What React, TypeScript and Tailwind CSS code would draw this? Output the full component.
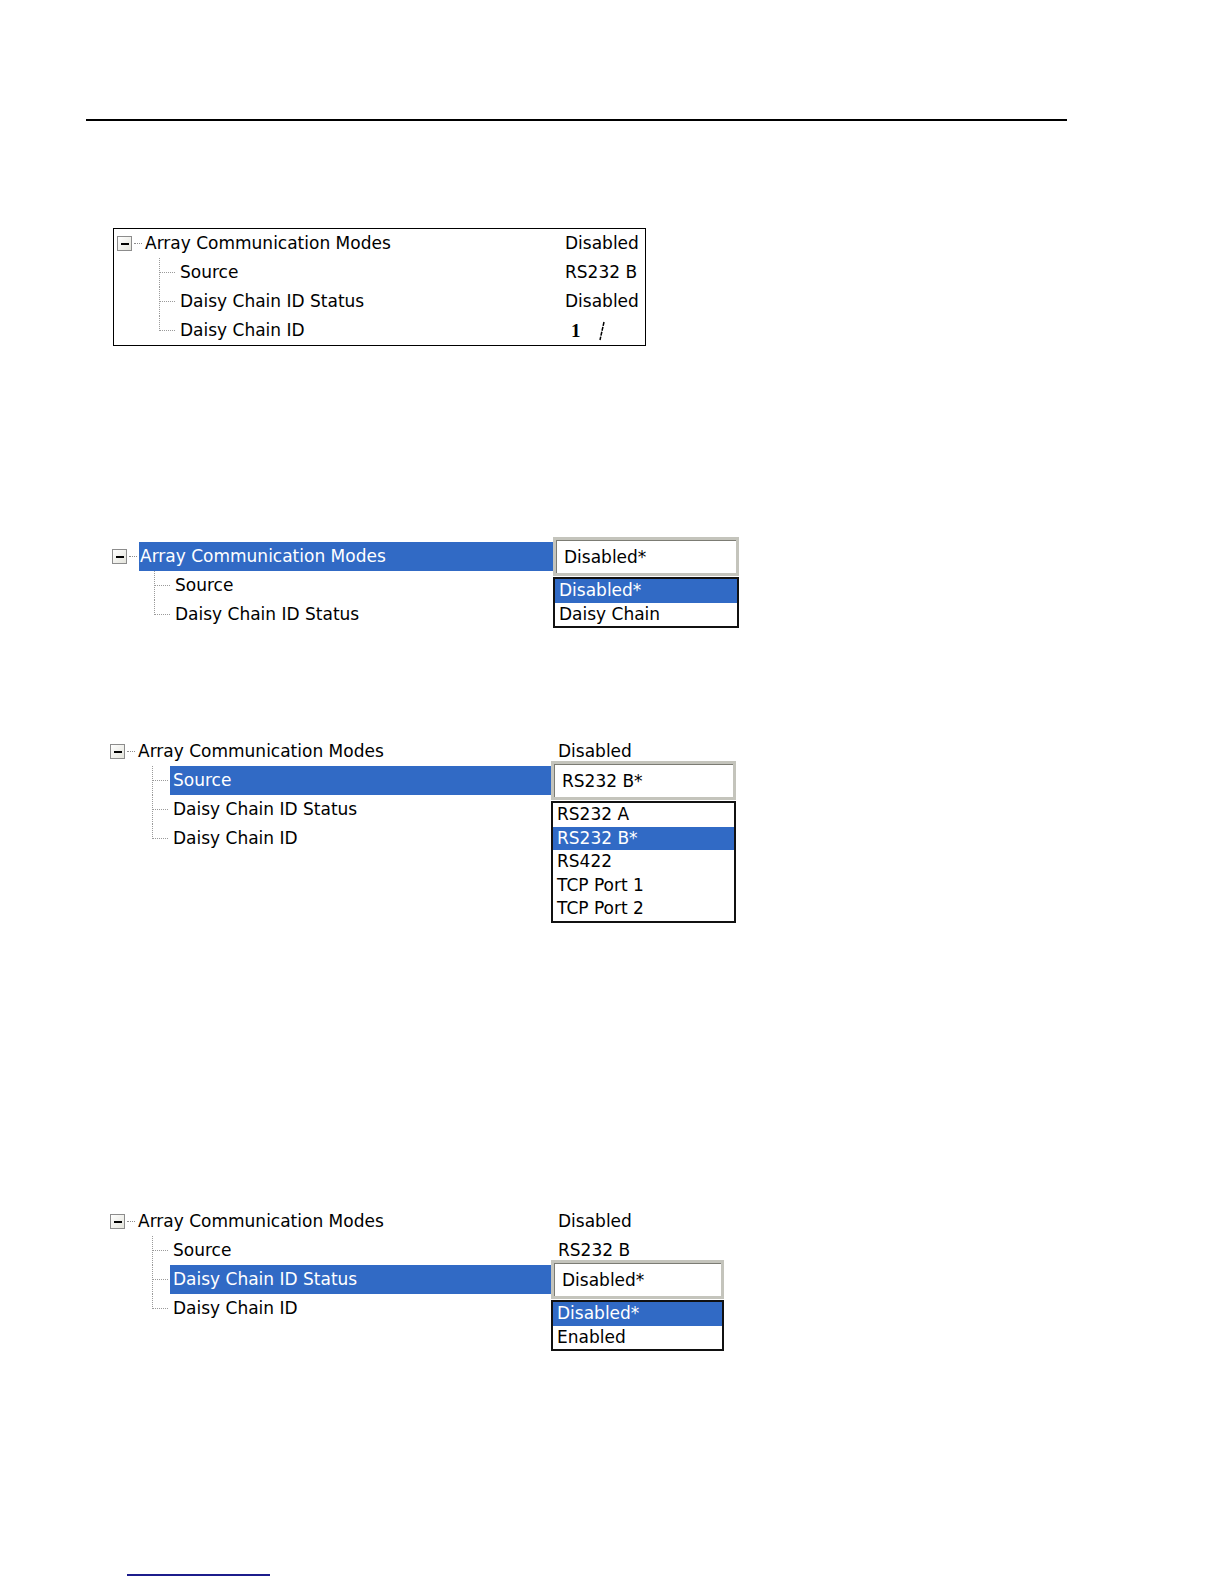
import React from 'react';

type Row = { label: string; value?: React.ReactNode };
type Drop = { current: string; items: string[]; selected: number; width: string };

const font = "font-['DejaVu_Sans',sans-serif] text-[17px] leading-none text-black";

const Minus = () => (
  <div className="flex items-center">
    <div className="w-[15px] h-[15px] border border-[#8c8c8c] bg-gradient-to-br from-white to-[#e4e4dc] flex items-center justify-center">
      <div className="w-[8px] h-[2px] bg-black" />
    </div>
    <div className="w-[8px] ml-[2px] border-t border-dotted border-[#8c8c8c]" />
  </div>
);

// dotted tree connector for child rows
const Branch = ({ last }: { last: boolean }) => (
  <svg width="60" height="29" className="shrink-0">
    <line x1="42.5" y1="0" x2="42.5" y2={last ? 15 : 29} stroke="#9a9a9a" strokeDasharray="1 1" />
    <line x1="43" y1="14.5" x2="58" y2="14.5" stroke="#9a9a9a" strokeDasharray="1 1" />
  </svg>
);

const Dropdown = ({ drop }: { drop: Drop }) => (
  <div className={`absolute left-0 top-[-5px] ${drop.width} z-10`}>
    <div className="h-[39px] border-[3px] border-[#c4c4bc] bg-white">
      <div className="h-full border-t border-l border-[#7c7c74] flex items-center pl-[7px]">{drop.current}</div>
    </div>
    <div className="mt-[1px] border-2 border-[#111] bg-white">
      {drop.items.map((it, i) => (
        <div
          key={it}
          className={`h-[23.5px] flex items-center pl-[4px] ${i === drop.selected ? 'bg-[#316ac5] text-white' : ''}`}
        >
          {it}
        </div>
      ))}
    </div>
  </div>
);

const Tree = ({ rows, active = -1, drop }: { rows: Row[]; active?: number; drop?: Drop }) => (
  <div className={font}>
    {rows.map((r, i) => {
      const root = i === 0;
      const on = i === active;
      return (
        <div key={r.label} className="flex h-[29px]">
          {root ? (
            <div className="w-[27px] shrink-0 flex items-center">
              <Minus />
            </div>
          ) : (
            <Branch last={i === rows.length - 1} />
          )}
          <div
            className={`${root ? 'w-[414px] pl-[1px]' : 'w-[381px] pl-[3px]'} shrink-0 flex items-center ${on ? 'bg-[#316ac5] text-white' : ''}`}
          >
            {r.label}
          </div>
          <div className="relative flex-1 flex items-center pl-[7px]">
            {on && drop ? <Dropdown drop={drop} /> : r.value}
          </div>
        </div>
      );
    })}
  </div>
);

const Cursor = () => (
  <svg width="10" height="22" className="ml-[16px]">
    <line x1="7" y1="2" x2="3" y2="20" stroke="#000" strokeWidth="1.5" strokeDasharray="4 1" />
  </svg>
);

export default function App() {
  return (
    <div className="w-[1224px] h-[1584px] bg-white overflow-hidden">
      <div className="pt-[119px]">
        <div className="ml-[86px] w-[981px] h-[2px] bg-black" />
      </div>

      {/* summary view */}
      <div className="mt-[107px] ml-[113px] w-[533px] border border-black pl-[3px]">
        <Tree
          rows={[
            { label: 'Array Communication Modes', value: 'Disabled' },
            { label: 'Source', value: 'RS232 B' },
            { label: 'Daisy Chain ID Status', value: 'Disabled' },
            {
              label: 'Daisy Chain ID',
              value: (
                <span className="flex items-center pl-[6px]">
                  <span className="font-['Liberation_Serif',serif] font-bold text-[19px]">1</span>
                  <Cursor />
                </span>
              ),
            },
          ]}
        />
      </div>

      {/* mode dropdown */}
      <div className="mt-[196px] ml-[112px]">
        <Tree
          rows={[{ label: 'Array Communication Modes' }, { label: 'Source' }, { label: 'Daisy Chain ID Status' }]}
          active={0}
          drop={{ current: 'Disabled*', items: ['Disabled*', 'Daisy Chain'], selected: 0, width: 'w-[186px]' }}
        />
      </div>

      {/* source dropdown */}
      <div className="mt-[108px] ml-[110px]">
        <Tree
          rows={[
            { label: 'Array Communication Modes', value: 'Disabled' },
            { label: 'Source' },
            { label: 'Daisy Chain ID Status' },
            { label: 'Daisy Chain ID' },
          ]}
          active={1}
          drop={{
            current: 'RS232 B*',
            items: ['RS232 A', 'RS232 B*', 'RS422', 'TCP Port 1', 'TCP Port 2'],
            selected: 1,
            width: 'w-[185px]',
          }}
        />
      </div>

      {/* daisy chain status dropdown */}
      <div className="mt-[354px] ml-[110px]">
        <Tree
          rows={[
            { label: 'Array Communication Modes', value: 'Disabled' },
            { label: 'Source', value: 'RS232 B' },
            { label: 'Daisy Chain ID Status' },
            { label: 'Daisy Chain ID' },
          ]}
          active={2}
          drop={{ current: 'Disabled*', items: ['Disabled*', 'Enabled'], selected: 0, width: 'w-[173px]' }}
        />
      </div>

      <div className="mt-[251px] ml-[127px] w-[143px] h-[2px] bg-[#1c1c8c]" />
    </div>
  );
}
